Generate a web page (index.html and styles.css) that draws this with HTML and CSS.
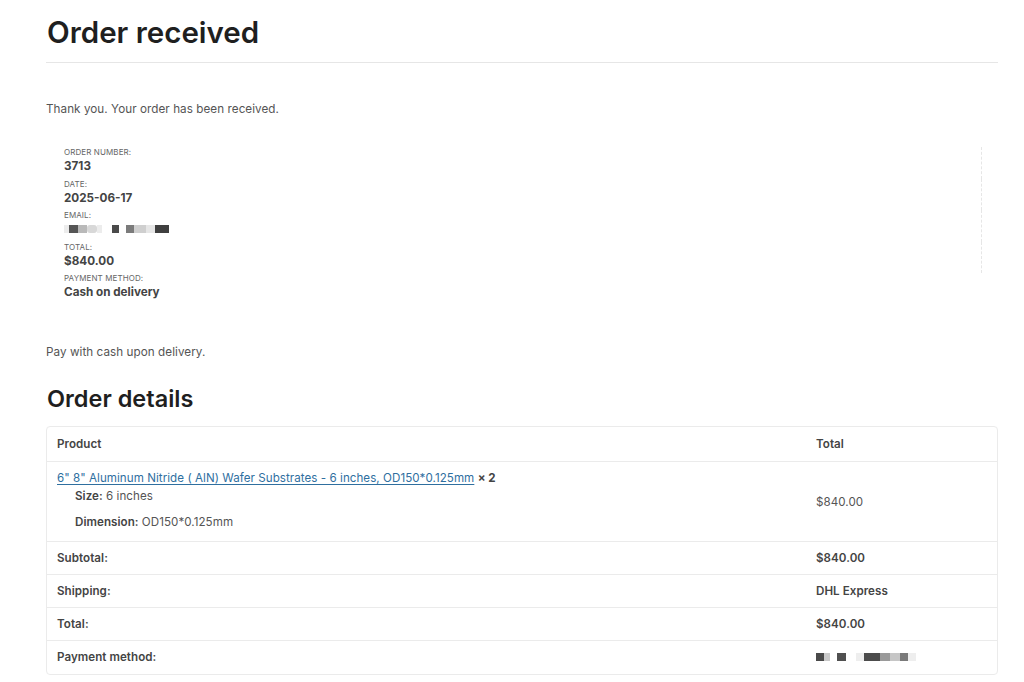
FILE: index.html
```html
<!DOCTYPE html>
<html lang="en">
<head>
<meta charset="utf-8">
<title>Order received</title>
<link rel="stylesheet" href="styles.css">
</head>
<body>
<main class="page">
  <header class="page-head">
    <h1 class="page-title">Order received</h1>
  </header>

  <p class="notice">Thank you. Your order has been received.</p>

  <ul class="overview">
    <li class="ov-item">
      <span class="ov-label">Order number:</span>
      <strong class="ov-value">3713</strong>
    </li>
    <li class="ov-item">
      <span class="ov-label">Date:</span>
      <strong class="ov-value">2025-06-17</strong>
    </li>
    <li class="ov-item">
      <span class="ov-label">Email:</span>
      <span class="ov-value blur-row">
        <i class="px p1"></i><i class="px p2"></i><i class="px p3"></i><i class="px p4"></i><i class="px p1"></i><i class="gap"></i><i class="px p5"></i><i class="gap-s"></i><i class="px p6"></i><i class="px p7"></i><i class="px p8"></i><i class="px p9"></i>
      </span>
    </li>
    <li class="ov-item">
      <span class="ov-label">Total:</span>
      <strong class="ov-value">$840.00</strong>
    </li>
    <li class="ov-item">
      <span class="ov-label">Payment method:</span>
      <strong class="ov-value">Cash on delivery</strong>
    </li>
  </ul>

  <p class="notice pay-note">Pay with cash upon delivery.</p>

  <section class="details">
    <h2 class="section-title">Order details</h2>
    <div class="table-wrap">
      <table class="order-table">
        <thead>
          <tr>
            <th class="col-product">Product</th>
            <th class="col-total">Total</th>
          </tr>
        </thead>
        <tbody>
          <tr class="item-row">
            <td class="col-product">
              <a href="#" class="item-link">6" 8" Aluminum Nitride ( AlN) Wafer Substrates - 6 inches, OD150*0.125mm</a> <strong class="qty">× 2</strong>
              <ul class="meta">
                <li><strong>Size:</strong> 6 inches</li>
                <li><strong>Dimension:</strong> OD150*0.125mm</li>
              </ul>
            </td>
            <td class="col-total plain">$840.00</td>
          </tr>
        </tbody>
        <tfoot>
          <tr>
            <th class="col-product">Subtotal:</th>
            <td class="col-total strong">$840.00</td>
          </tr>
          <tr>
            <th class="col-product">Shipping:</th>
            <td class="col-total strong">DHL Express</td>
          </tr>
          <tr>
            <th class="col-product">Total:</th>
            <td class="col-total strong">$840.00</td>
          </tr>
          <tr>
            <th class="col-product">Payment method:</th>
            <td class="col-total strong">
              <span class="blur-row small">
                <i class="px q1"></i><i class="px q2"></i><i class="gap-s"></i><i class="px q3"></i><i class="gap"></i><i class="px q4"></i><i class="px q5"></i><i class="px q6"></i><i class="px q7"></i><i class="px q8"></i><i class="px q4"></i>
              </span>
            </td>
          </tr>
        </tfoot>
      </table>
    </div>
  </section>
</main>
</body>
</html>
```

FILE: styles.css
```css
* { box-sizing: border-box; }

html, body {
  margin: 0;
  padding: 0;
  background: #ffffff;
}

body {
  font-family: Inter, "Noto Sans", "Liberation Sans", sans-serif;
  color: #2b2b2b;
  font-size: 12px;
}

.page {
  padding: 0 26px 0 46px;
}

.page-head {
  border-bottom: 1px solid #e6e6e6;
  padding-top: 14px;
  padding-bottom: 12px;
}

.page-title {
  margin: 0;
  font-size: 29.5px;
  line-height: 36px;
  font-weight: 600;
  color: #1f1f1f;
  padding-left: 1px;
}

.notice {
  margin: 0;
  font-size: 11.7px;
  line-height: 16px;
  color: #555;
  letter-spacing: 0.05px;
}

.page-head + .notice {
  margin-top: 38px;
}

.overview {
  list-style: none;
  margin: 30px 0 0 0;
  padding: 0 0 0 18px;
  width: 936px;
  display: flex;
  flex-direction: column;
}

.ov-item {
  display: flex;
  flex-direction: column;
  height: 31.5px;
  border-right: 1px dashed #e6e6e6;
}

.ov-item:last-child {
  border-right-color: transparent;
}

.ov-label {
  font-size: 8px;
  line-height: 11px;
  text-transform: uppercase;
  color: #666;
  letter-spacing: 0.1px;
}

.ov-value {
  font-size: 11.7px;
  line-height: 16px;
  font-weight: 700;
  color: #444;
}

.blur-row {
  display: flex;
  align-items: center;
  height: 16px;
}

.px {
  display: inline-block;
  height: 8px;
}
.gap { width: 10px; display: inline-block; }
.gap-s { width: 7px; display: inline-block; }

.p1 { width: 5px; background: #ececec; }
.p2 { width: 9px; background: #555; }
.p3 { width: 9px; background: #b9b9b9; }
.p4 { width: 10px; background: #d8d8d8; border-radius: 3px; }
.p5 { width: 7px; background: #4a4a4a; }
.p6 { width: 8px; background: #7b7b7b; }
.p7 { width: 12px; background: #cfcfcf; }
.p8 { width: 9px; background: #e6e6e6; }
.p9 { width: 14px; background: #3f3f3f; }

.pay-note {
  margin-top: 39px;
}

.section-title {
  margin: 24px 0 0 0;
  font-size: 23.5px;
  line-height: 30px;
  font-weight: 600;
  color: #1f1f1f;
  padding-left: 1px;
}

.table-wrap {
  margin-top: 12px;
  width: 952px;
  border: 1px solid #ebebeb;
  border-radius: 4px;
  overflow: hidden;
}

.order-table {
  width: 100%;
  border-collapse: collapse;
  font-size: 11.6px;
  letter-spacing: 0.05px;
}

.order-table th,
.order-table td {
  text-align: left;
  padding: 0 10px;
  height: 33px;
  vertical-align: middle;
}

.order-table thead th {
  font-weight: 600;
  color: #444;
  height: 35px;
  border-bottom: 1px solid #ebebeb;
}

.col-product { width: 759px; }

.item-row td {
  height: 80px;
  border-bottom: 1px solid #ebebeb;
}

.item-row .col-product {
  padding-top: 7px;
  padding-bottom: 8px;
}

.item-link {
  color: #2f6f9f;
  text-decoration: underline;
  text-underline-offset: 2px;
  text-decoration-thickness: 1px;
}

.qty {
  font-weight: 700;
  color: #444;
}

.meta {
  list-style: none;
  margin: 2px 0 0 0;
  padding: 0 0 0 18px;
}

.meta li {
  line-height: 18px;
  color: #555;
}
.meta li + li { margin-top: 8px; }

.meta strong {
  font-weight: 600;
  color: #444;
}

.plain {
  color: #555;
  font-weight: 400;
}

.order-table tfoot th,
.order-table tfoot td {
  border-bottom: 1px solid #ebebeb;
  font-weight: 600;
  color: #444;
}

.order-table tfoot tr:last-child th,
.order-table tfoot tr:last-child td {
  border-bottom: 0;
}

.q1 { width: 8px; background: #4a4a4a; }
.q2 { width: 6px; background: #c9c9c9; }
.q3 { width: 9px; background: #505050; }
.q4 { width: 8px; background: #eeeeee; }
.q5 { width: 16px; background: #4c4c4c; }
.q6 { width: 10px; background: #9a9a9a; }
.q7 { width: 10px; background: #c6c6c6; }
.q8 { width: 8px; background: #7a7a7a; }
```
